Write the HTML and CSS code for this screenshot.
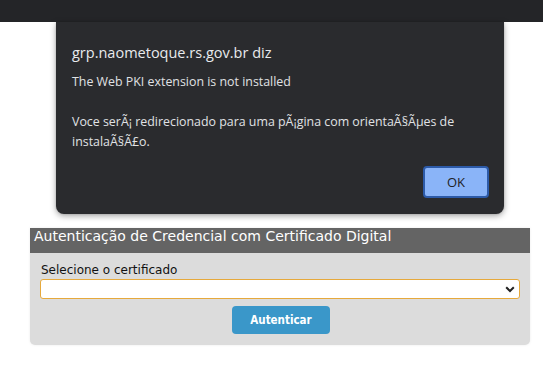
FILE: index.html
```html
<!DOCTYPE html>
<html lang="pt-BR">
<head>
<meta charset="utf-8">
<title>Autenticação</title>
<link rel="stylesheet" href="styles.css">
</head>
<body>
<div class="topbar"></div>
<main class="page">
  <section class="panel">
    <h1 class="panel-title">Autenticação de Credencial com Certificado Digital</h1>
    <div class="panel-body">
      <label class="field-label">Selecione o certificado</label>
      <div class="select">
        <svg class="chev" width="10" height="7" viewBox="0 0 10 7"><path d="M1.2 1.3 L5 5 L8.8 1.3" fill="none" stroke="#222" stroke-width="2"/></svg>
      </div>
      <div class="actions"><button class="btn">Autenticar</button></div>
    </div>
  </section>
</main>
<div class="dialog">
  <div class="dialog-title">grp.naometoque.rs.gov.br diz</div>
  <div class="dialog-msg">The Web PKI extension is not installed

Voce serÃ¡ redirecionado para uma pÃ¡gina com orientaÃ§Ãµes de instalaÃ§Ã£o.</div>
  <div class="dialog-actions"><button class="ok">OK</button></div>
</div>
</body>
</html>
```
FILE: styles.css
```css
html, body { margin: 0; padding: 0; background: #fff; }
body { width: 543px; height: 370px; overflow: hidden; position: relative; }

.topbar { height: 22px; background: #242528; }

.page { padding: 206px 13px 0 30px; }

.panel {
  width: 500px;
  background: #dcdcdc;
  border-radius: 0 0 5px 5px;
  box-shadow: 0 0 3px rgba(0,0,0,0.08);
}
.panel-title {
  margin: 0;
  height: 25px;
  line-height: 26px;
  background: #646464;
  color: #fff;
  font: normal 14px "DejaVu Sans", sans-serif;
  padding-left: 4px;
  letter-spacing: 0;
  white-space: nowrap;
}
.panel-body {
  padding: 8px 10px 11px 10px;
  display: flex;
  flex-direction: column;
}
.field-label {
  font: 12px "DejaVu Sans", sans-serif;
  color: #111;
  line-height: 18px;
  padding-left: 1px;
}
.select {
  height: 18px;
  background: #fff;
  border: 1px solid #e6a93c;
  border-radius: 3px;
  display: flex;
  align-items: center;
  justify-content: flex-end;
  padding-right: 4px;
}
.actions { display: flex; justify-content: center; margin-top: 7px; }
.btn {
  width: 98px;
  height: 28px;
  border: 0;
  border-radius: 4px;
  background: #3a97c9;
  color: #fff;
  font: bold 11.5px "DejaVu Sans Condensed", "DejaVu Sans", sans-serif;
  padding: 0;
  margin-left: 2px;
}

.dialog {
  position: absolute;
  left: 56px;
  top: 22px;
  width: 448px;
  height: 192px;
  box-sizing: border-box;
  background: #2a2b2e;
  border-radius: 0 0 8px 8px;
  box-shadow: 0 2px 6px rgba(0,0,0,0.35), 0 0 2px rgba(0,0,0,0.2);
  padding: 20px 15px 16px 16px;
  color: #e8eaed;
  font-family: "Open Sans", "Noto Sans", sans-serif;
  display: flex;
  flex-direction: column;
}
.dialog-title { font-size: 14.5px; line-height: 22px; color: #e8eaed; }
.dialog-msg {
  margin-top: 8px;
  font-size: 12.4px;
  line-height: 20px;
  white-space: pre-line;
  width: 410px;
  color: #e0e2e5;
}
.dialog-actions { margin-top: auto; display: flex; justify-content: flex-end; }
.ok {
  width: 66px;
  height: 32px;
  box-sizing: border-box;
  background: #8ab4f8;
  border: 2px solid #2c5aa8;
  border-radius: 4px;
  color: #202124;
  font: 13px "Open Sans", "Noto Sans", sans-serif;
  padding: 0;
}
```
